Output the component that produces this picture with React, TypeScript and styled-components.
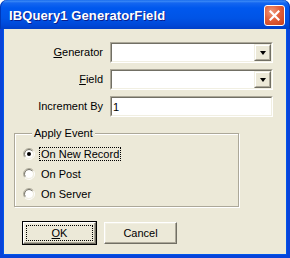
import styled, { createGlobalStyle } from 'styled-components';

const GlobalStyle = createGlobalStyle`
  html, body {
    margin: 0;
    padding: 0;
    background: #ffffff;
  }
  * {
    box-sizing: border-box;
  }
`;

const Window = styled.div`
  width: 290px;
  height: 258px;
  display: flex;
  flex-direction: column;
  font-family: 'Liberation Sans', Arial, sans-serif;
  font-size: 11px;
  color: #000;
`;

const TitleBar = styled.div`
  height: 29px;
  flex: none;
  display: flex;
  align-items: center;
  padding: 0 4px 0 9px;
  border-radius: 7px 7px 0 0;
  background: linear-gradient(
    to bottom,
    #0a5ee8 0px,
    #3d8cf7 1px,
    #1466f0 3px,
    #0058ee 8px,
    #0054e6 18px,
    #0048d8 25px,
    #003fc8 29px
  );
  box-shadow: inset 1px 0 0 #0037b8, inset -1px 0 0 #0037b8;
`;

const Title = styled.span`
  flex: 1;
  color: #ffffff;
  font-weight: bold;
  font-size: 13px;
  letter-spacing: 0.1px;
  padding-top: 1px;
  text-shadow: 1px 1px 0 #0a1e8c;
`;

const CloseButton = styled.div`
  width: 21px;
  height: 21px;
  margin-top: 2px;
  margin-right: 1px;
  border: 1px solid #ffffff;
  border-radius: 3px;
  background: radial-gradient(circle at 35% 30%, #ef9a7c 0%, #e2603b 45%, #c83f1a 100%);
  display: flex;
  align-items: center;
  justify-content: center;
`;

const Body = styled.div`
  flex: 1;
  background: #ece9d8;
  border-left: 3px solid #0843d9;
  border-right: 3px solid #0843d9;
  border-bottom: 3px solid #0843d9;
  box-shadow: inset 1px 0 0 #0055ea, inset -1px 0 0 #0055ea, inset 0 -1px 0 #0055ea;
  display: flex;
  flex-direction: column;
  padding-top: 13px;
`;

const FormGrid = styled.div`
  display: grid;
  grid-template-columns: 100px 163px;
  column-gap: 7px;
  row-gap: 6px;
  align-items: center;
`;

const Label = styled.label`
  text-align: right;
  white-space: nowrap;
  padding-bottom: 1px;
`;

const Accel = styled.span`
  text-decoration: underline;
  text-underline-offset: 1px;
`;

const Sunken = styled.div`
  height: 21px;
  border-style: solid;
  border-width: 1px;
  border-color: #aca899 #ffffff #ffffff #aca899;
  background: #ffffff;
`;

const SunkenInner = styled.div`
  height: 100%;
  border-style: solid;
  border-width: 1px;
  border-color: #716f64 #f1efe2 #f1efe2 #716f64;
  display: flex;
  align-items: center;
  padding-left: 1px;
`;

const DropButton = styled.div`
  margin-left: auto;
  width: 17px;
  height: 17px;
  background: #ece9d8;
  border-style: solid;
  border-width: 1px;
  border-color: #f1efe2 #716f64 #716f64 #f1efe2;
  display: flex;
  align-items: center;
  justify-content: center;
`;

const DropButtonInner = styled.div`
  width: 100%;
  height: 100%;
  border-style: solid;
  border-width: 1px;
  border-color: #ffffff #aca899 #aca899 #ffffff;
  display: flex;
  align-items: center;
  justify-content: center;
`;

const Arrow = styled.div`
  width: 0;
  height: 0;
  border-left: 3.5px solid transparent;
  border-right: 3.5px solid transparent;
  border-top: 4px solid #000;
  margin-top: 1px;
`;

const GroupBox = styled.fieldset`
  margin: 10px 0 0 11px;
  width: 225px;
  height: 80px;
  padding: 7px 0 0 8px;
  border: 1px solid #aca899;
  box-shadow: inset 1px 1px 0 #ffffff, 1px 1px 0 #ffffff;
  display: flex;
  flex-direction: column;
  gap: 6px;
`;

const Legend = styled.legend`
  margin-left: 9px;
  padding: 0 2px 0 2px;
  background: #ece9d8;
  font-size: 11px;
  line-height: 13px;
`;

const RadioRow = styled.div`
  display: flex;
  align-items: center;
  gap: 4px;
  height: 14px;
`;

const RadioText = styled.span<{ focused?: boolean }>`
  padding: 0 1px;
  line-height: 12px;
  border: 1px dotted ${(p) => (p.focused ? '#000' : 'transparent')};
`;

const ButtonRow = styled.div`
  display: flex;
  gap: 6px;
  margin: 14px 0 0 19px;
`;

const Button = styled.div<{ isDefault?: boolean }>`
  width: 75px;
  height: 24px;
  background: #ece9d8;
  border: 1px solid ${(p) => (p.isDefault ? '#000' : 'transparent')};
  display: flex;
`;

const ButtonFace = styled.div<{ isDefault?: boolean }>`
  flex: 1;
  border-style: solid;
  border-width: 1px;
  border-color: #ffffff #716f64 #716f64 #ffffff;
  box-shadow: inset -1px -1px 0 #aca899, inset 1px 1px 0 #f1efe2;
  display: flex;
  align-items: center;
  justify-content: center;
  padding: ${(p) => (p.isDefault ? '2px' : '0')};
`;

const FocusRect = styled.div`
  flex: 1;
  align-self: stretch;
  border: 1px dotted #000;
  display: flex;
  align-items: center;
  justify-content: center;
`;

const Radio = ({ checked }: { checked?: boolean }) => (
  <svg width="12" height="12" viewBox="0 0 12 12">
    <path d="M6 0.5 A5.5 5.5 0 0 0 1.6 9.3" stroke="#aca899" fill="none" />
    <path d="M6 0.5 A5.5 5.5 0 0 1 10.4 2.7" stroke="#aca899" fill="none" />
    <path d="M10.4 2.7 A5.5 5.5 0 0 1 1.6 9.3" stroke="#ffffff" fill="none" />
    <circle cx="6" cy="6" r="4.5" fill="#ffffff" />
    <path d="M6 1.5 A4.5 4.5 0 0 0 2.4 8.7" stroke="#716f64" fill="none" />
    <path d="M6 1.5 A4.5 4.5 0 0 1 9.6 3.3" stroke="#716f64" fill="none" />
    <path d="M9.6 3.3 A4.5 4.5 0 0 1 2.4 8.7" stroke="#f1efe2" fill="none" />
    {checked && <circle cx="6" cy="6" r="2" fill="#000" />}
  </svg>
);

const Combo = () => (
  <Sunken>
    <SunkenInner>
      <DropButton>
        <DropButtonInner>
          <Arrow />
        </DropButtonInner>
      </DropButton>
    </SunkenInner>
  </Sunken>
);

export default function App() {
  return (
    <Window>
      <GlobalStyle />
      <TitleBar>
        <Title>IBQuery1 GeneratorField</Title>
        <CloseButton>
          <svg width="11" height="11" viewBox="0 0 11 11">
            <path d="M1.5 1.5 L9.5 9.5 M9.5 1.5 L1.5 9.5" stroke="#fff" strokeWidth="2.2" strokeLinecap="square" />
          </svg>
        </CloseButton>
      </TitleBar>
      <Body>
        <FormGrid>
          <Label><Accel>G</Accel>enerator</Label>
          <Combo />
          <Label><Accel>F</Accel>ield</Label>
          <Combo />
          <Label>Increment By</Label>
          <Sunken>
            <SunkenInner>1</SunkenInner>
          </Sunken>
        </FormGrid>
        <GroupBox>
          <Legend>Apply Event</Legend>
          <RadioRow>
            <Radio checked />
            <RadioText focused>On New Record</RadioText>
          </RadioRow>
          <RadioRow>
            <Radio />
            <RadioText>On Post</RadioText>
          </RadioRow>
          <RadioRow>
            <Radio />
            <RadioText>On Server</RadioText>
          </RadioRow>
        </GroupBox>
        <ButtonRow>
          <Button isDefault>
            <ButtonFace isDefault>
              <FocusRect><Accel>O</Accel>K</FocusRect>
            </ButtonFace>
          </Button>
          <Button>
            <ButtonFace>Cancel</ButtonFace>
          </Button>
        </ButtonRow>
      </Body>
    </Window>
  );
}
